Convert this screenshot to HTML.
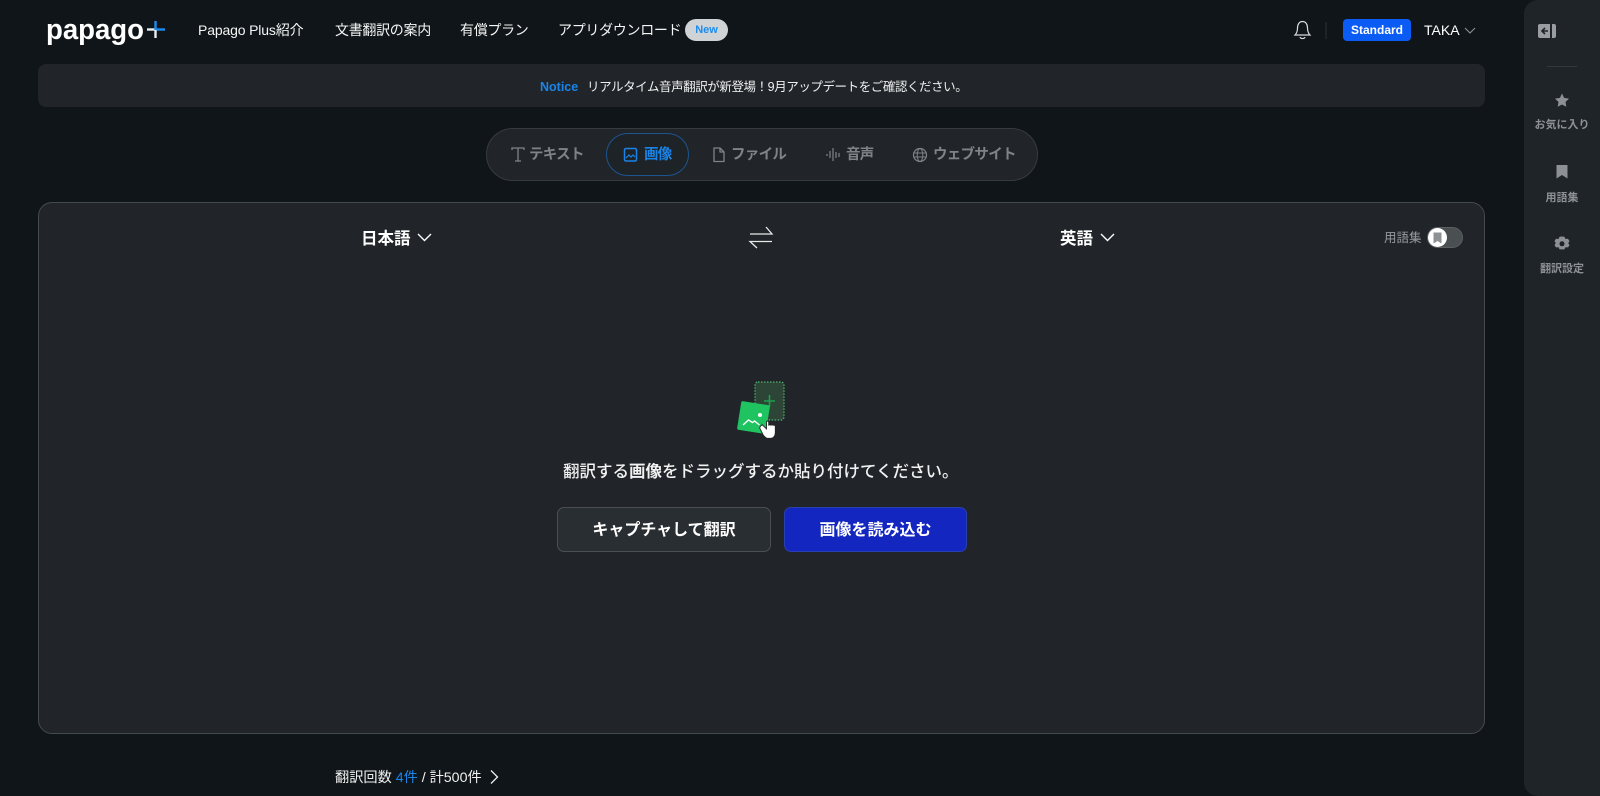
<!DOCTYPE html>
<html lang="ja"><head><meta charset="utf-8"><title>Papago Plus</title>
<style>
html,body{margin:0;padding:0;width:1600px;height:796px;overflow:hidden;background:#0f1518}
body{position:relative;font-family:"Liberation Sans","Noto Sans CJK JP",sans-serif;color:#fff}
.a{position:absolute;white-space:nowrap;line-height:20px}
svg{position:absolute;overflow:visible}
.nav{font-size:14px;top:19.500px;color:#f4f5f5;letter-spacing:-.3px}
.tab{font-size:14.500px;font-weight:700;top:145px;color:#7e8387;letter-spacing:-.7px}
.side{font-size:11px;font-weight:700;color:#8d9195;left:1524px;width:76px;text-align:center}
</style></head><body>
<div class="a" style="left:46px;top:12.500px;font-size:29px;line-height:34px;font-weight:700;transform:scaleX(.95);transform-origin:0 0">papago</div>
<svg style="left:0;top:0" width="1600" height="796" fill="none">
<path d="M147 29.500H156" stroke="#e8eef2" stroke-width="2.400"/><path d="M156 29.500H165" stroke="#1b8cf0" stroke-width="2.400"/><path d="M155.500 21V30" stroke="#1b8cf0" stroke-width="2.400"/><path d="M155.500 30V38" stroke="#e8eef2" stroke-width="2.400"/>
<path d="M1295 35h15c-2-2-2.500-4-2.500-7 0-4-2-6.500-5-6.500s-5 2.500-5 6.500c0 3-.5 5-2.500 7zM1300 37c.5 2 4.500 2 5 0" stroke="#d8dadb" stroke-width="1.200"/>
<path d="M1326 22V39" stroke="#2c3235" stroke-width="1"/>
<path d="M1465 28l5 5 5-5" stroke="#8d9195" stroke-width="1.100"/>
<path d="M972 81l5 5-5 5" stroke="#e8e8e8" stroke-width="1.300"/>
<path d="M1458 82l8 8M1466 82l-8 8" stroke="#9a9ea1" stroke-width="1.200"/>
</svg>
<div class="a nav" style="left:198px;letter-spacing:-.15px">Papago Plus紹介</div>
<div class="a nav" style="left:335px">文書翻訳の案内</div>
<div class="a nav" style="left:460px">有償プラン</div>
<div class="a nav" style="left:558px">アプリダウンロード</div>
<div class="a" style="left:685px;top:19px;width:43px;height:22px;border-radius:11px;background:#cfd3d6;color:#1b8cf0;font-size:11px;font-weight:700;line-height:22px;text-align:center">New</div>
<div class="a" style="left:1343px;top:19px;width:68px;height:22px;border-radius:4px;background:#0b5cf5;font-size:12px;font-weight:700;line-height:22px;text-align:center">Standard</div>
<div class="a" style="left:1424px;top:20px;font-size:14px">TAKA</div>

<div class="a" style="left:38px;top:64px;width:1447px;height:43px;border-radius:8px;background:#212529"></div>
<div class="a" style="left:540px;top:76.500px;font-size:12.500px;font-weight:700;color:#1b84e8">Notice</div>
<div class="a" style="left:587px;top:76.500px;font-size:12.500px;color:#f0f0f0;letter-spacing:-.43px">リアルタイム音声翻訳が新登場！9月アップデートをご確認ください。</div>

<div class="a" style="left:486px;top:128px;width:552px;height:53px;box-sizing:border-box;border:1px solid #363b3f;border-radius:27px;background:#212529"></div>
<div class="a" style="left:606px;top:133px;width:83px;height:43px;box-sizing:border-box;border:1px solid #1c5590;border-radius:22px;background:#1d2327"></div>
<svg style="left:0;top:0" width="1600" height="796" fill="none">
<path d="M512 150v-2h12v2M518 148v13M515 161h6" stroke="#7e8387" stroke-width="1.300"/>
<rect x="624.500" y="148.500" width="12" height="12.500" rx="1.500" stroke="#1b84e8" stroke-width="1.500"/><path d="M626 158l3-3 2 2 2-2 2 2" stroke="#1b84e8" stroke-width="1.200"/>
<path d="M714 148h6l4 4v9.500h-10zM720 148v4h4" stroke="#7e8387" stroke-width="1.300" stroke-linejoin="round"/>
<path d="M827 157v2M830 154v7M833 151v13M836 155v6M839 156v4" stroke="#7e8387" stroke-width="1.200" transform="translate(0,-3)"/>
<circle cx="920" cy="155" r="6.500" stroke="#7e8387" stroke-width="1.200"/><ellipse cx="920" cy="155" rx="2.800" ry="6.500" stroke="#7e8387" stroke-width="1"/><path d="M914 153h12M914 157h12" stroke="#7e8387" stroke-width="1"/>
</svg>
<div class="a tab" style="left:529px">テキスト</div>
<div class="a tab" style="left:644px;color:#1b84e8">画像</div>
<div class="a tab" style="left:731px">ファイル</div>
<div class="a tab" style="left:846px">音声</div>
<div class="a tab" style="left:933px">ウェブサイト</div>

<div class="a" style="left:38px;top:202px;width:1447px;height:532px;box-sizing:border-box;border:1.500px solid #454a4e;border-radius:14px;background:#212529"></div>
<div class="a" style="left:361px;top:229px;font-size:16.500px;font-weight:700">日本語</div>
<div class="a" style="left:1060px;top:229px;font-size:16.500px;font-weight:700">英語</div>
<svg style="left:0;top:0" width="1600" height="796" fill="none">
<path d="M418 234l6.500 6.500L431 234M1101 234l6.500 6.500 6.500-6.500" stroke="#fff" stroke-width="1.400"/>
<path d="M750 234H772L766 227M772 241.500H750L757 248" stroke="#e8e8e8" stroke-width="1.300"/>
</svg>
<div class="a" style="left:1384px;top:227.500px;font-size:12.500px;color:#999da0">用語集</div>
<div class="a" style="left:1427px;top:227px;width:36px;height:21px;box-sizing:border-box;border:1px solid #5a5f62;border-radius:11px;background:#4a4f52"></div>
<div class="a" style="left:1428px;top:228px;width:19px;height:19px;border-radius:50%;background:#fff"></div>
<svg style="left:0;top:0" width="1600" height="796">
<path d="M1433.500 232.500h8v11l-4-2.500-4 2.500z" fill="#8d9195"/>
</svg>

<!-- illustration -->
<svg style="left:0;top:0" width="1600" height="796">
<rect x="755" y="382" width="29" height="38" rx="3" fill="#2d4537" stroke="#4fb36f" stroke-width="1.200" stroke-dasharray="1.500 1.500"/>
<path d="M769.500 395v12M764 401h11" stroke="#1e9e4f" stroke-width="1.600"/>
<rect x="739" y="403" width="29" height="29" rx="2" fill="#1fc35f" transform="rotate(9 753.500 417.500)"/>
<path d="M743 425l5.500-5 4 2.500 2-1.500 5 4" stroke="#fff" stroke-width="1.400" fill="none"/>
<circle cx="760" cy="415" r="2" fill="#fff"/>
<path d="M762 425l4 4v-6c0-1.500 2-1.500 2 0v3c0-1 2-1 2 0 0-1 2-1 2 0 0-.7 2-.7 2 .5v6c0 3-2 5-4 5h-3c-2 0-3-2-4-3l-3-6c-.5-1.500 1.500-3 2-3z" fill="#fff" stroke="#222" stroke-width=".8" transform="translate(761 424) scale(1.100) translate(-761 -424.500)"/>
</svg>

<div class="a" style="left:563px;top:462px;font-size:16.500px;font-weight:500;color:#f2f2f2">翻訳する<b>画像</b>をドラッグするか貼り付けてください。</div>
<div class="a" style="left:557px;top:507px;width:214px;height:45px;box-sizing:border-box;border:1.500px solid #4a4f52;border-radius:7px;background:#292e32;font-size:16px;font-weight:700;line-height:45px;text-align:center">キャプチャして翻訳</div>
<div class="a" style="left:784px;top:507px;width:183px;height:45px;box-sizing:border-box;border:1.500px solid #2a3fb0;border-radius:7px;background:#1426c0;font-size:16px;font-weight:700;line-height:45px;text-align:center">画像を読み込む</div>

<div class="a" style="left:335px;top:767.500px;font-size:14.200px;color:#f0f0f0">翻訳回数 <span style="color:#1b84e8">4件</span> / 計500件</div>
<svg style="left:0;top:0" width="1600" height="796" fill="none"><path d="M491 770.500l6.500 6.500-6.500 6.500" stroke="#eee" stroke-width="1.300"/></svg>

<!-- sidebar -->
<div class="a" style="left:1524px;top:0;width:76px;height:796px;border-radius:14px 0 0 14px;background:#1f2428"></div>
<div class="a" style="left:1547px;top:66px;width:30px;height:1px;background:#33383c"></div>
<svg style="left:0;top:0" width="1600" height="796">
<path d="M1540 24h10v14h-10a2 2 0 0 1-2-2V26a2 2 0 0 1 2-2zM1552 24h2a2 2 0 0 1 2 2v10a2 2 0 0 1-2 2h-2z" fill="#9a9ea1"/>
<path d="M1548 31h-6M1545 28l-3 3 3 3" stroke="#1f2428" stroke-width="1.600" fill="none"/>
<path d="M1562 93.500l2.100 4.400 4.900.7-3.500 3.400.8 4.800-4.300-2.300-4.300 2.300.8-4.800-3.500-3.400 4.900-.7z" fill="#8d9195"/>
<path d="M1556.500 165h11v13.500l-5.500-3.500-5.500 3.500z" fill="#8d9195"/>
<path d="M1562 236.500l2.400.3 1.100 2.200 2.500-.2 1.500 2.300-1.300 2 1.300 2-1.500 2.300-2.500-.2-1.100 2.200-4.800 0-1.100-2.200-2.500.2-1.500-2.300 1.300-2-1.300-2 1.500-2.300 2.500.2 1.100-2.200z" fill="#8d9195"/>
<circle cx="1562" cy="243.800" r="2.500" fill="#1f2428"/>
</svg>
<div class="a side" style="top:115px">お気に入り</div>
<div class="a side" style="top:188px">用語集</div>
<div class="a side" style="top:259px">翻訳設定</div>
</body></html>
